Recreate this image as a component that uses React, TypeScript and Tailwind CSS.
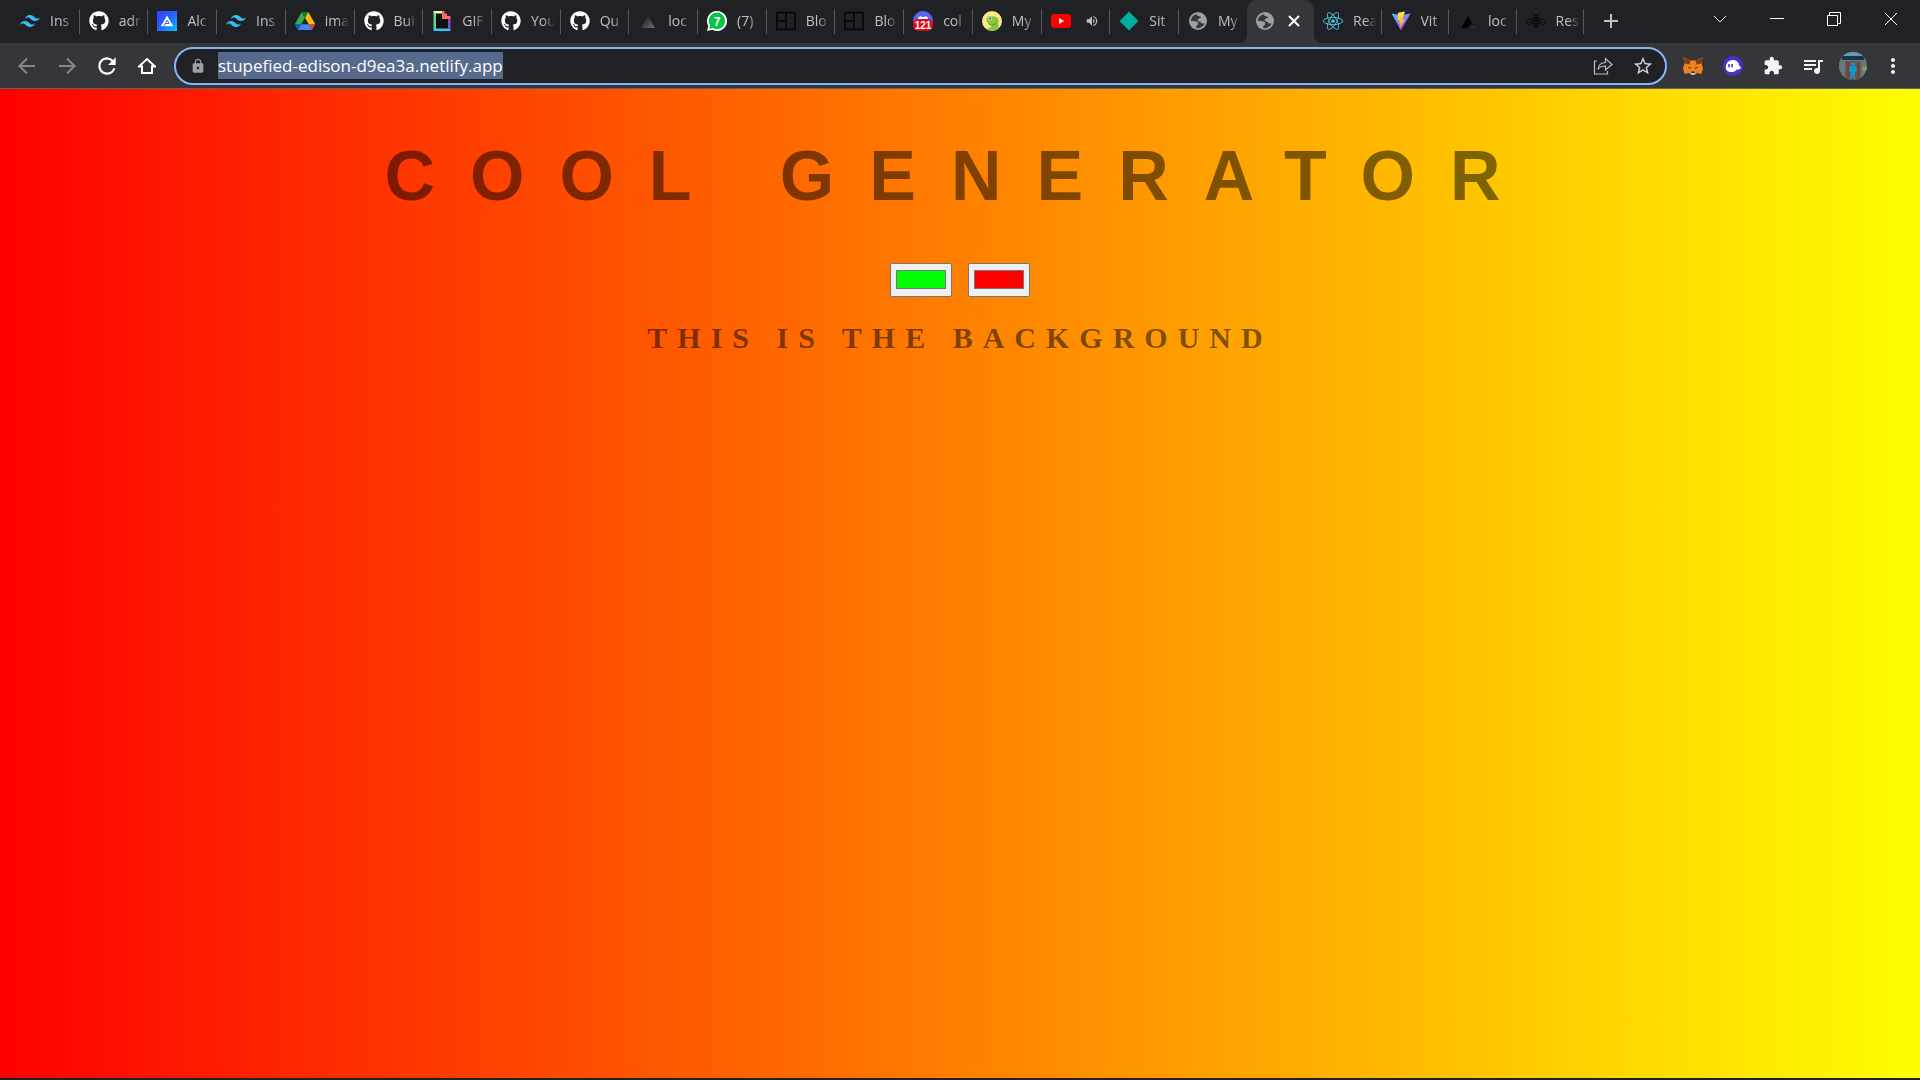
import type { ReactNode } from "react";
import { FaGithub, FaReact } from "react-icons/fa";
import { SiTailwindcss } from "react-icons/si";
import { MdExtension, MdLock, MdMoreVert, MdQueueMusic, MdRefresh, MdStarBorder, MdVolumeUp } from "react-icons/md";

const Tailwind = () => <SiTailwindcss className="size-5 text-[#38bdf8]" />;
const Github = () => <FaGithub className="size-5 text-white" />;

const Alchemy = () => (
  <svg viewBox="0 0 20 20" className="size-5">
    <defs>
      <linearGradient id="alchemy" x1="0" y1="0" x2="1" y2="1">
        <stop offset="0" stopColor="#363ff9" />
        <stop offset="0.5" stopColor="#2a62fb" />
        <stop offset="1" stopColor="#05c3ff" />
      </linearGradient>
    </defs>
    <rect width="20" height="20" fill="url(#alchemy)" />
    <path d="M10 4.500l6.200 10.700H3.800z" fill="#fff" />
    <path d="M6.500 15.500l3.800-6.300 1.700 3.300H8.500" fill="none" stroke="#2a6dfb" strokeWidth="1" />
  </svg>
);

const Drive = () => (
  <svg viewBox="0 0 87.3 78" className="size-5">
    <path d="m6.600 66.850 3.850 6.650c.8 1.400 1.950 2.500 3.300 3.300l13.750-23.800h-27.500c0 1.550.4 3.100 1.200 4.500z" fill="#0066da" />
    <path d="m43.650 25-13.750-23.800c-1.350.8-2.500 1.900-3.300 3.300l-25.400 44a9.060 9.060 0 0 0-1.200 4.500h27.500z" fill="#34a853" />
    <path d="m73.550 76.800c1.350-.8 2.500-1.900 3.300-3.300l1.600-2.750 7.650-13.250c.8-1.400 1.200-2.950 1.200-4.500h-27.500l5.850 11.500z" fill="#ea4335" />
    <path d="m43.650 25 13.750-23.800c-1.350-.8-2.900-1.200-4.500-1.200h-18.500c-1.600 0-3.150.45-4.500 1.200z" fill="#00832d" />
    <path d="m59.800 53h-32.300l-13.750 23.800c1.350.8 2.900 1.200 4.500 1.200h50.800c1.600 0 3.150-.45 4.500-1.200z" fill="#4285f4" />
    <path d="m73.400 26.500-12.700-22c-.8-1.400-1.950-2.500-3.300-3.300l-13.750 23.800 16.150 28h27.450c0-1.550-.4-3.100-1.200-4.500z" fill="#fbbc04" />
  </svg>
);

const Giphy = () => (
  <svg viewBox="0 0 20 20" className="size-5">
    <path d="M4 2h9v4h4v12H4z" fill="#101010" />
    <path d="M1.500 0H10v2.500H1.500z" fill="#fff58c" />
    <path d="M1.500 2H4v16H1.500z" fill="#60d890" />
    <path d="M1.500 17.500h17V20h-17z" fill="#35c7fa" />
    <path d="M16 8h2.500v9.500H16z" fill="#8448c8" />
    <path d="M10 0h2.500v2.500H15V5h3.500v3H10z" fill="#f66" />
  </svg>
);

const Vercel = ({ dev = false }: { dev?: boolean }) => (
  <svg viewBox="0 0 20 20" className="size-5">
    <defs>
      <linearGradient id="vercelDev" x1="0" y1="0" x2="1" y2="1">
        <stop offset="0.3" stopColor="#303030" />
        <stop offset="1" stopColor="#707070" />
      </linearGradient>
      <linearGradient id="vercelProd" x1="0" y1="0" x2="1" y2="1">
        <stop offset="0.6" stopColor="#000" />
        <stop offset="1" stopColor="#444" />
      </linearGradient>
    </defs>
    <path d="M10 5l7 12H3z" fill={dev ? "url(#vercelDev)" : "url(#vercelProd)"} />
  </svg>
);

const Whatsapp = () => (
  <svg viewBox="0 0 20 20" className="size-5">
    <path d="M10 0a10 10 0 1 1-4.700 18.800L0 20l1.300-5A10 10 0 0 1 10 0z" fill="#fff" />
    <path d="M10 1.600a8.300 8.300 0 1 1-4.300 15.500l-3.500.9 1-3.400A8.300 8.300 0 0 1 10 1.600z" fill="#08c445" />
    <text x="10" y="14.500" textAnchor="middle" fontSize="12" fontWeight="700" fontFamily="Liberation Sans, sans-serif" fill="#fff">
      7
    </text>
  </svg>
);

const Blocks = () => (
  <svg viewBox="0 0 20 20" className="size-5" fill="none" stroke="#050505" strokeWidth="1.500">
    <path d="M1 1.500h18v17H1zM10 1.500v17M1 10h9" />
  </svg>
);

const Discord = () => (
  <svg viewBox="0 0 20 20" className="size-5">
    <circle cx="10" cy="10" r="10" fill="#5865f2" />
    <path d="M5 8c0-1.500 1-2.600 3-2.800l.6.800h2.800l.6-.8c2 .2 3 1.300 3 2.800z" fill="#fff" />
    <rect y="8" width="20" height="12" rx="5" fill="#dd0a18" />
    <text x="10" y="17.500" textAnchor="middle" fontSize="10" fontWeight="700" fontFamily="Liberation Sans, sans-serif" fill="#fff">
      121
    </text>
  </svg>
);

const Gecko = () => (
  <svg viewBox="0 0 20 20" className="size-5">
    <circle cx="10" cy="10" r="10" fill="#f9e988" />
    <path d="M4.500 9c-.4-3 2-4.300 4.500-3.800 3.500-.4 7 .8 7.600 3.800.3 2-.2 3-.6 3.300 1 2 .6 4.300-.6 6.500-3 1.700-8.500 1.300-10.800-.8 2-.6 4.600-1.600 5-3.800-2.600-.2-4.800-2-5.100-5.200z" fill="#8bc53f" />
    <path d="M7 13.500c3 .8 6 .2 8-1.700" stroke="#5d9732" strokeWidth="1" fill="none" />
    <circle cx="8" cy="7.500" r="2" fill="#d8edc0" />
    <circle cx="8" cy="7.500" r="1.100" fill="#3a4a5b" />
  </svg>
);

const Youtube = () => (
  <svg viewBox="0 0 20 20" className="size-5">
    <rect y="3" width="20" height="14" rx="3.500" fill="#f00" />
    <path d="M8 7l5.200 3L8 13z" fill="#fff" />
  </svg>
);

const Netlify = () => (
  <svg viewBox="0 0 20 20" className="size-5">
    <path d="M10 .5l9.500 9.500-9.500 9.500L.5 10z" fill="#00ad9f" />
  </svg>
);

const Globe = () => (
  <svg viewBox="0 0 20 20" className="size-5">
    <circle cx="10" cy="10" r="9" fill="#9aa0a6" />
    <path d="M8.500 3.200C5 4 3 6.800 2.900 10c2 .2 4 .1 5.500.5 1.600.4 2.300 1.600 1.600 2.900-.5 1-1.600.8-1.800 1.900-.1.700.1 1.200.1 1.700 3.700.8 7-1 8.300-4.400-1.600-.3-2.600.3-3.400-.9-.7-1-2-1-3-1.700-1-.7-.7-1.800.1-2.300.9-.5 2.300-.1 2.600-1.100.3-.9-.7-1.300-1.600-1.400-1.300-.1-2.400-.7-2.800-2z" fill="#35363a" />
  </svg>
);

const Vite = () => (
  <svg viewBox="0 0 20 20" className="size-5">
    <defs>
      <linearGradient id="viteA" x1="0" y1="0" x2="0.6" y2="1">
        <stop stopColor="#41d1ff" />
        <stop offset="1" stopColor="#bd34fe" />
      </linearGradient>
      <linearGradient id="viteB" x1="0" y1="0" x2="0" y2="1">
        <stop stopColor="#ffea4a" />
        <stop offset="1" stopColor="#ffa800" />
      </linearGradient>
    </defs>
    <path d="M.5 2.500L10 4.200l9.500-1.700L10 19.500z" fill="url(#viteA)" />
    <path d="M14 .5L7 1.800 6.500 9.500l2.300-.4-.8 3.300 1.500-.4-1 5.500 5.500-9.200-2.700.5z" fill="url(#viteB)" />
  </svg>
);

const Bee = () => (
  <svg viewBox="0 0 20 20" className="size-5" fill="none" stroke="#070707">
    <path d="M8 4.500h4M6.500 7h7M7 9.500h6M7 12h6M7.500 14.500h5M9 16.500h2" strokeWidth="1.500" />
    <path d="M6.500 9C3.500 7.500.7 8.500.7 11s1.600 3.800 3 3 1.800-2.500 2.800-5zM13.500 9c3-1.500 5.800-.5 5.800 2s-1.600 3.800-3 3-1.800-2.500-2.800-5zM8 4L7 2.500M12 4l1-1.500" />
  </svg>
);

const ReactLogo = () => <FaReact className="size-5 text-[#53c1de]" />;

type TabInfo = { title: string; icon: ReactNode; sound?: boolean; active?: boolean; last?: boolean };

const leadingTabs: TabInfo[] = [
  { title: "Ins", icon: <Tailwind /> },
  { title: "adr", icon: <Github /> },
  { title: "Alc", icon: <Alchemy /> },
  { title: "Ins", icon: <Tailwind /> },
  { title: "ima", icon: <Drive /> },
  { title: "Bui", icon: <Github /> },
  { title: "GIF", icon: <Giphy /> },
  { title: "You", icon: <Github /> },
  { title: "Qu", icon: <Github /> },
  { title: "loc", icon: <Vercel dev /> },
  { title: "(7)", icon: <Whatsapp /> },
  { title: "Blo", icon: <Blocks /> },
  { title: "Blo", icon: <Blocks /> },
  { title: "col", icon: <Discord /> },
  { title: "My", icon: <Gecko /> },
  { title: "", icon: <Youtube />, sound: true },
  { title: "Sit", icon: <Netlify /> },
];

const trailingTabs: TabInfo[] = [
  { title: "My", icon: <Globe />, last: true },
  { title: "", icon: <Globe />, active: true },
  { title: "Rea", icon: <ReactLogo /> },
  { title: "Vit", icon: <Vite /> },
  { title: "loc", icon: <Vercel /> },
  { title: "Res", icon: <Bee /> },
];

function Tab({ title, icon, sound, active, last }: TabInfo) {
  if (active) {
    return (
      <div className="relative h-[43px] min-w-0 flex-1 rounded-t-[10px] bg-[#35363a]">
        <span className="absolute bottom-0 -left-2 size-2 bg-[radial-gradient(circle_at_0_0,#202124_8px,#35363a_8px)]" />
        <span className="absolute -right-2 bottom-0 size-2 bg-[radial-gradient(circle_at_100%_0,#202124_8px,#35363a_8px)]" />
        <div className="flex h-[42px] items-center gap-[13px] pl-2">
          {icon}
          <button aria-label="Close tab">
            <svg viewBox="0 0 12 12" className="size-3" stroke="#fff" strokeWidth="2">
              <path d="M1 1l10 10M11 1L1 11" />
            </svg>
          </button>
        </div>
      </div>
    );
  }
  return (
    <div className="flex h-[42px] min-w-0 flex-1 items-center">
      <button className="flex min-w-0 flex-1 items-center gap-[10px] pl-[9px]">
        <span className="shrink-0">{icon}</span>
        {sound ? (
          <MdVolumeUp className="ml-1 size-[14px] text-[#bdc1c6]" />
        ) : (
          <span className="text-left text-[14px] leading-5 whitespace-nowrap text-[#bdc1c6] [mask-image:linear-gradient(to_right,#000_12px,transparent_24px)]">
            {title}
          </span>
        )}
      </button>
      {!last && <span className="h-[25px] w-px bg-[#55575b]" />}
    </div>
  );
}

function TabStrip() {
  return (
    <header className="flex h-[43px] bg-[#202124] pl-[11px]">
      <nav className="flex min-w-0 flex-1" aria-label="Tabs">
        <div className="flex min-w-0 flex-[1168]">
          {leadingTabs.map((tab, i) => (
            <Tab key={i} {...tab} />
          ))}
        </div>
        <div className="flex min-w-0 flex-[405]">
          {trailingTabs.map((tab, i) => (
            <Tab key={i} {...tab} />
          ))}
        </div>
      </nav>
      <div className="flex w-[336px] justify-between pr-px pl-[19px]">
        <button aria-label="New tab" className="h-[42px]">
          <svg viewBox="0 0 16 16" className="size-4" stroke="#bdc1c6" strokeWidth="2">
            <path d="M8 1v14M1 8h14" />
          </svg>
        </button>
        <div className="flex h-[37px] text-white">
          <button aria-label="Search tabs" className="flex w-[57px] items-center justify-center">
            <svg viewBox="0 0 14 14" className="size-[14px]" fill="none" stroke="currentColor">
              <path d="M1 4l6 6 6-6" />
            </svg>
          </button>
          <button aria-label="Minimize" className="flex w-[57px] items-center justify-center">
            <svg viewBox="0 0 14 14" className="size-[14px]" fill="none" stroke="currentColor">
              <path d="M0 6.500h14" />
            </svg>
          </button>
          <button aria-label="Restore" className="flex w-[57px] items-center justify-center">
            <svg viewBox="0 0 14 14" className="size-[14px]" fill="none" stroke="currentColor">
              <path d="M.5 3.500h10v10H.5zM2.500 3.500v-3h11v11h-3" />
            </svg>
          </button>
          <button aria-label="Close" className="flex w-[57px] items-center justify-center">
            <svg viewBox="0 0 14 14" className="size-[14px]" fill="none" stroke="currentColor">
              <path d="M1 1l12 12M13 1L1 13" />
            </svg>
          </button>
        </div>
      </div>
    </header>
  );
}

const Fox = () => (
  <svg viewBox="0 0 20 20" className="size-5">
    <path d="M.5 1l7 3.500h5l7-3.500-.8 6.500L20 13l-1.800 5-4.500-.9-2.200 1.600h-3l-2.200-1.600-4.500.9L0 13l1.300-5.500z" fill="#f0831f" />
    <path d="M.5 1l7 3.500-1 4L1.300 7.500zM19.500 1l-7 3.500 1 4 5.200-1z" fill="#7a4218" />
    <path d="M7.500 16h5l-.5 2.700H8z" fill="#d8c4b4" />
    <path d="M8.500 15.500h3l.5 1.500H8zM4.500 11l3.500.5-.5 1.500zM15.500 11l-3.500.5.5 1.500z" fill="#26303c" />
  </svg>
);

const Phantom = () => (
  <svg viewBox="0 0 20 20" className="size-5">
    <circle cx="10" cy="10" r="10" fill="#4a2fd0" />
    <path d="M2.800 11.500C2.800 7 5.800 4 9.800 4c4 0 6 2.600 6.300 5.400.1 1 1.700.8 1.700 2 0 1.500-2 2.200-4 2-1.600 2-3.300 2.600-5.500 2.600-3 0-5.500-1.400-5.500-4.500z" fill="#fff" />
    <path d="M6 8v3.200M9 8v3.200" stroke="#4a2fd0" strokeWidth="1.600" />
  </svg>
);

const Avatar = () => (
  <svg viewBox="0 0 28 28" className="size-7">
    <defs>
      <clipPath id="avatar">
        <circle cx="14" cy="14" r="14" />
      </clipPath>
    </defs>
    <g clipPath="url(#avatar)">
      <path d="M0 0h28v28H0z" fill="#637a82" />
      <path d="M0 0h28v5H0z" fill="#609bb8" />
      <path d="M3 4h22v4H3z" fill="#173747" />
      <path d="M6 9h16v19H6z" fill="#76534a" />
      <path d="M14 9v19M9 11v15M19 11v15" stroke="#4d3935" />
      <circle cx="14" cy="12" r="1.800" fill="#079bd2" />
      <path d="M11 14h6l1 5-2 1-.3 7h-1.400L14 21l-.5 6h-1.400L11.700 20 10 19z" fill="#079bd2" />
      <path d="M24 15h4v4h-4z" fill="#8aa344" />
    </g>
  </svg>
);

function Toolbar() {
  return (
    <div className="flex h-[46px] items-center border-b border-[#5f6368] bg-[#35363a] pr-[7px]">
      <div className="flex w-[174px] items-center pl-[7px]">
        <button aria-label="Back" className="flex w-10 justify-center">
          <svg viewBox="0 0 18 18" className="size-[18px]" fill="none" stroke="#85878b" strokeWidth="2">
            <path d="M17 9H2M9 1.500L1.500 9 9 16.500" />
          </svg>
        </button>
        <button aria-label="Forward" className="flex w-10 justify-center">
          <svg viewBox="0 0 18 18" className="size-[18px]" fill="none" stroke="#85878b" strokeWidth="2">
            <path d="M1 9h15M9 1.500L16.500 9 9 16.500" />
          </svg>
        </button>
        <button aria-label="Reload" className="flex w-10 justify-center">
          <MdRefresh className="size-[26px] text-white" />
        </button>
        <button aria-label="Home" className="flex w-10 justify-center">
          <svg viewBox="0 0 18 18" className="size-[18px]" fill="none" stroke="#fff" strokeWidth="2">
            <path d="M1 9.500L9 2l8 7.500h-3V16H4V9.500z" />
          </svg>
        </button>
      </div>
      <div className="flex h-[38px] min-w-0 flex-1 items-center rounded-full border-2 border-[#8ab4f8] bg-[#202124] pr-[2px] pl-[14px]">
        <MdLock className="mr-[12px] size-4 shrink-0 text-[#9aa0a6]" />
        <input
          type="text"
          aria-label="Address"
          readOnly
          value="stupefied-edison-d9ea3a.netlify.app"
          className="field-sizing-content h-[27px] bg-[#556a8c] font-['Open_Sans','Noto_Sans',sans-serif] text-[17px] text-white outline-none"
        />
        <div className="ml-auto flex items-center">
          <button aria-label="Share" className="flex w-10 justify-center">
            <svg viewBox="0 0 20 20" className="size-5" fill="none" stroke="#bdc1c6" strokeWidth="1.200">
              <path d="M4 5H1.500v13h13v-3M5 13.500c.5-4.500 3-7 7.500-7V2.500l6.500 6-6.500 5.500v-4c-3.500 0-6 1-7.500 3.500z" />
            </svg>
          </button>
          <button aria-label="Bookmark" className="flex w-10 justify-center">
            <MdStarBorder className="size-[22px] shrink-0 text-[#d0d2d5]" />
          </button>
        </div>
      </div>
      <div className="flex items-center pl-[6px]">
        <button aria-label="Fox wallet" className="flex w-10 justify-center"><Fox /></button>
        <button aria-label="Ghost wallet" className="flex w-10 justify-center"><Phantom /></button>
        <button aria-label="Extensions" className="flex w-10 justify-center"><MdExtension className="size-5 text-[#f1f3f4]" /></button>
        <button aria-label="Media controls" className="flex w-10 justify-center"><MdQueueMusic className="size-6 text-[#f1f3f4]" /></button>
        <button aria-label="Profile" className="flex w-10 justify-center"><Avatar /></button>
        <button aria-label="Menu" className="flex w-10 justify-center"><MdMoreVert className="size-6 text-[#f1f3f4]" /></button>
      </div>
    </div>
  );
}

function ColorPicker({ label, color }: { label: string; color: string }) {
  return (
    <input
      type="color"
      aria-label={label}
      defaultValue={color}
      className="h-[34px] w-[62px] appearance-none rounded-[2px] border border-[#767676] bg-[#efefef] px-[5px] pt-[6px] pb-[7px] [&::-webkit-color-swatch]:rounded-none [&::-webkit-color-swatch]:border [&::-webkit-color-swatch]:border-[#777777] [&::-webkit-color-swatch-wrapper]:p-0"
    />
  );
}

export default function App() {
  return (
    <div className="flex min-h-screen flex-col border-b-2 border-[#202124] font-['Open_Sans','Noto_Sans',sans-serif]">
      <TabStrip />
      <Toolbar />
      <main className="flex flex-1 flex-col items-center bg-[linear-gradient(to_right,#ff0000,#ffff00)] pt-[47px] font-bold text-black/50">
        <h1 className="font-['Liberation_Sans',sans-serif] text-[70px] leading-[80px] tracking-[35px]">COOL GENERATOR</h1>
        <div className="mt-[47px] flex gap-4">
          <ColorPicker label="First colour" color="#00ff00" />
          <ColorPicker label="Second colour" color="#ff0000" />
        </div>
        <h2 className="mt-[23px] font-['Liberation_Serif',serif] text-[30px] leading-9 tracking-[10px]">THIS IS THE BACKGROUND</h2>
      </main>
    </div>
  );
}
